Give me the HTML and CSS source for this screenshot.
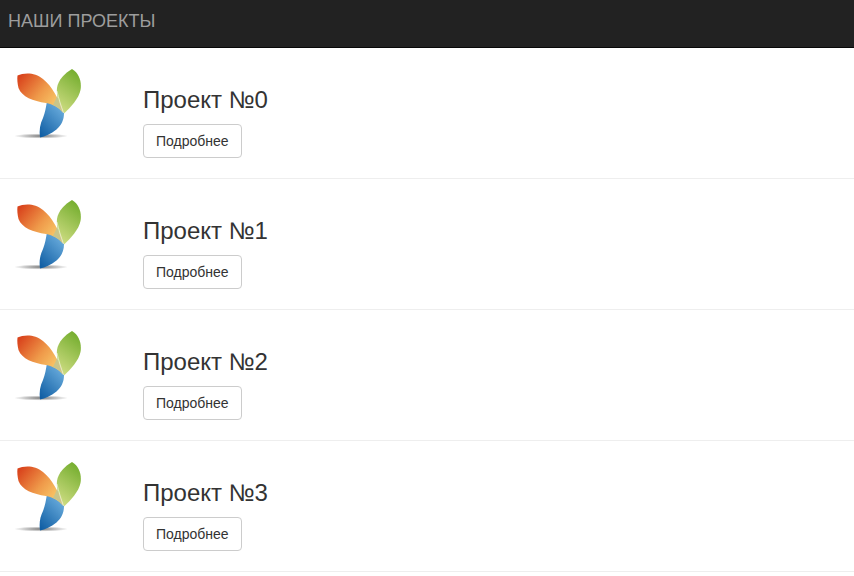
FILE: index.html
```html
<!DOCTYPE html>
<html lang="ru">
<head>
  <meta charset="UTF-8">
  <title>Наши проекты</title>
  <link rel="stylesheet" href="styles.css">
</head>
<body>
  <svg class="defs" width="0" height="0">
    <defs>
      <linearGradient id="orange" x1="0" y1="0.15" x2="1" y2="0.85">
        <stop offset="0" stop-color="#d9431c"/>
        <stop offset="0.5" stop-color="#ef9a4a"/>
        <stop offset="1" stop-color="#fcd873"/>
      </linearGradient>
      <linearGradient id="green" x1="0.7" y1="0" x2="0.3" y2="1">
        <stop offset="0" stop-color="#74ad2e"/>
        <stop offset="1" stop-color="#cfdd83"/>
      </linearGradient>
      <linearGradient id="blue" x1="0.8" y1="0" x2="0.1" y2="1">
        <stop offset="0" stop-color="#6fb1e0"/>
        <stop offset="1" stop-color="#0f5da3"/>
      </linearGradient>
      <radialGradient id="shadow">
        <stop offset="0" stop-color="#777"/>
        <stop offset="1" stop-color="#777" stop-opacity="0"/>
      </radialGradient>
      <g id="logo">
        <ellipse cx="41" cy="136" rx="27" ry="2.6" fill="url(#shadow)"/>
        <path d="M72 69C79 73 82 82 80.500 90C79 98 71 107 63.500 114C60 107 56 97 57 88C58 80 65 73 72 69Z" fill="url(#green)"/>
        <path d="M47 101C55 102 60.500 108 64 113C64 120 61.500 125 56.500 129.500C51 134 45 136.500 40 137.500C39 130 40 124 43 118C45 113 46 107 47 101Z" fill="url(#blue)"/>
        <path d="M17.500 75.500C24 72.500 35 72 43 79C52 86 59 99 63.500 113C58 107 53 104.500 46 103C33 101 22 97 18.500 88C17.500 84 17 79 17.500 75.500Z" fill="url(#orange)"/>
        <path d="M57 96C59 101 61.500 107 63.500 113C60 109 57 106.500 53 105C54.500 102 56 99 57 96Z" fill="#c9c58a"/>
        <path d="M57 91C58.500 98 61 106 63.500 113" fill="none" stroke="#fff" stroke-width="0.7" stroke-opacity="0.8"/>
      </g>
    </defs>
  </svg>

  <header class="navbar">НАШИ ПРОЕКТЫ</header>

  <div class="project">
    <svg class="logo" viewBox="0 60 90 90" width="90" height="90"><use href="#logo"/></svg>
    <div class="info">
      <h3>Проект №0</h3>
      <a class="btn" href="#">Подробнее</a>
    </div>
  </div>
  <div class="project">
    <svg class="logo" viewBox="0 60 90 90" width="90" height="90"><use href="#logo"/></svg>
    <div class="info">
      <h3>Проект №1</h3>
      <a class="btn" href="#">Подробнее</a>
    </div>
  </div>
  <div class="project">
    <svg class="logo" viewBox="0 60 90 90" width="90" height="90"><use href="#logo"/></svg>
    <div class="info">
      <h3>Проект №2</h3>
      <a class="btn" href="#">Подробнее</a>
    </div>
  </div>
  <div class="project">
    <svg class="logo" viewBox="0 60 90 90" width="90" height="90"><use href="#logo"/></svg>
    <div class="info">
      <h3>Проект №3</h3>
      <a class="btn" href="#">Подробнее</a>
    </div>
  </div>
</body>
</html>
```

FILE: styles.css
```css
body {
  margin: 0;
  font-family: "Liberation Sans", Arial, sans-serif;
  font-size: 14px;
  color: #333;
  background-color: #fff;
}

.defs {
  display: block;
  height: 0;
}

.navbar {
  height: 47px;
  padding-left: 8px;
  line-height: 43px;
  font-size: 18px;
  color: #9d9d9d;
  background-color: #222;
  border-bottom: 1px solid #080808;
}

.project {
  display: flex;
  height: 130px;
  border-bottom: 1px solid #eee;
}

.logo {
  flex: none;
  margin-top: 12px;
  margin-right: 53px;
  filter: blur(0.3px);
}

.info {
  padding-top: 39px;
}

h3 {
  margin: 0 0 11px;
  font-size: 24px;
  font-weight: 400;
  line-height: 1.1;
}

.btn {
  display: inline-block;
  padding: 6px 12px;
  line-height: 20px;
  color: #333;
  text-decoration: none;
  background-color: #fff;
  border: 1px solid #ccc;
  border-radius: 4px;
}
```
